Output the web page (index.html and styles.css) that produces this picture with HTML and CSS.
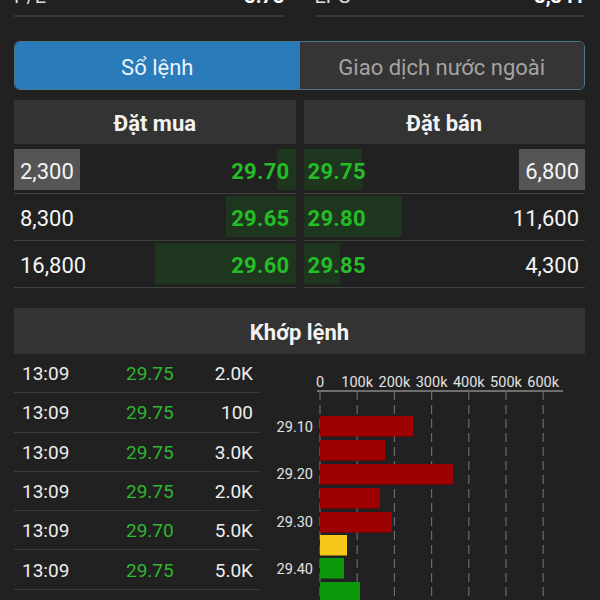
FILE: index.html
```html
<!DOCTYPE html>
<html>
<head>
  <title>Sổ lệnh</title>
  <meta name="viewport" content="width=device-width, initial-scale=1">
  <link rel="stylesheet" href="styles.css">
</head>
<body>
  <div class="page">

    <div class="stats">
      <div class="stat"><span class="stat-label">P/E</span><span class="stat-value">3.73</span></div>
      <div class="stat"><span class="stat-label">EPS</span><span class="stat-value">3,341</span></div>
    </div>

    <div class="tabs">
      <div class="tab active">Sổ lệnh</div>
      <div class="tab">Giao dịch nước ngoài</div>
    </div>

    <div class="book">
      <div class="side buy">
        <div class="panel-head">Đặt mua</div>
        <div class="level">
          <span class="depth" style="width:19px"></span>
          <span class="qty hl">2,300</span><span class="price">29.70</span>
        </div>
        <div class="level">
          <span class="depth" style="width:70px"></span>
          <span class="qty">8,300</span><span class="price">29.65</span>
        </div>
        <div class="level">
          <span class="depth" style="width:141px"></span>
          <span class="qty">16,800</span><span class="price">29.60</span>
        </div>
      </div>
      <div class="side sell">
        <div class="panel-head">Đặt bán</div>
        <div class="level">
          <span class="depth" style="width:58px"></span>
          <span class="price">29.75</span><span class="qty hl">6,800</span>
        </div>
        <div class="level">
          <span class="depth" style="width:98px"></span>
          <span class="price">29.80</span><span class="qty">11,600</span>
        </div>
        <div class="level">
          <span class="depth" style="width:36px"></span>
          <span class="price">29.85</span><span class="qty">4,300</span>
        </div>
      </div>
    </div>

    <div class="panel-head match-head">Khớp lệnh</div>

    <div class="match">
      <div class="trades">
        <div class="trade"><span>13:09</span><span class="t-price">29.75</span><span class="t-vol">2.0K</span></div>
        <div class="trade"><span>13:09</span><span class="t-price">29.75</span><span class="t-vol">100</span></div>
        <div class="trade"><span>13:09</span><span class="t-price">29.75</span><span class="t-vol">3.0K</span></div>
        <div class="trade"><span>13:09</span><span class="t-price">29.75</span><span class="t-vol">2.0K</span></div>
        <div class="trade"><span>13:09</span><span class="t-price">29.70</span><span class="t-vol">5.0K</span></div>
        <div class="trade"><span>13:09</span><span class="t-price">29.75</span><span class="t-vol">5.0K</span></div>
      </div>

      <svg class="chart" width="325" height="260" viewBox="0 0 325 260">
        <g class="axis-text">
          <text x="60" y="33">0</text>
          <text x="97.2" y="33">100k</text>
          <text x="134.4" y="33">200k</text>
          <text x="171.6" y="33">300k</text>
          <text x="208.8" y="33">400k</text>
          <text x="246" y="33">500k</text>
          <text x="283.2" y="33">600k</text>
        </g>
        <line class="axis" x1="57" y1="37" x2="303" y2="37"/>
        <g class="grid">
          <line x1="60" y1="37" x2="60" y2="260"/>
          <line x1="97.2" y1="37" x2="97.2" y2="260"/>
          <line x1="134.4" y1="37" x2="134.4" y2="260"/>
          <line x1="171.6" y1="37" x2="171.6" y2="260"/>
          <line x1="208.8" y1="37" x2="208.8" y2="260"/>
          <line x1="246" y1="37" x2="246" y2="260"/>
          <line x1="283.2" y1="37" x2="283.2" y2="260"/>
        </g>
        <g class="bars">
          <rect class="down" x="60" y="62" width="93" height="20.5"/>
          <rect class="down" x="60" y="86" width="65" height="20.5"/>
          <rect class="down" x="60" y="110" width="133" height="20.5"/>
          <rect class="down" x="60" y="134" width="60" height="20.5"/>
          <rect class="down" x="60" y="158" width="72" height="20.5"/>
          <rect class="ref" x="60" y="181" width="27" height="20.5"/>
          <rect class="up" x="60" y="204" width="24" height="20.5"/>
          <rect class="up" x="60" y="228" width="40" height="20.5"/>
        </g>
        <g class="price-text">
          <text x="53" y="78">29.10</text>
          <text x="53" y="125">29.20</text>
          <text x="53" y="172.5">29.30</text>
          <text x="53" y="220">29.40</text>
        </g>
      </svg>
    </div>

  </div>
</body>
</html>
```

FILE: styles.css
```css
body {
  margin: 0;
  background: #212121;
  color: #eee;
  font-family: Roboto, "Noto Sans", sans-serif;
  overflow: hidden;
}
.page {
  padding: 0 15px 0 14px;
}

/* top stats */
.stats {
  display: grid;
  grid-template-columns: 1fr 1fr;
  gap: 30px;
  margin-top: -23px;
}
.stat {
  display: flex;
  justify-content: space-between;
  align-items: center;
  height: 40px;
  box-sizing: border-box;
  border-bottom: 2px solid #363636;
  font-size: 20px;
}
.stat-label {
  color: #ddd;
}
.stat-value {
  font-weight: bold;
  color: #fff;
}

/* tabs */
.tabs {
  display: flex;
  margin-top: 24px;
  height: 49px;
  border: 1px solid #4b7690;
  border-radius: 6px;
  overflow: hidden;
  box-sizing: border-box;
}
.tab {
  flex: 1;
  display: flex;
  align-items: center;
  justify-content: center;
  padding-top: 3px;
  font-size: 22px;
  color: #a4a4a4;
  background: #363434;
}
.tab.active {
  background: #2a7bba;
  color: #eaf2fa;
}

/* order book */
.book {
  display: grid;
  grid-template-columns: 1fr 1fr;
  gap: 8px;
  margin-top: 10px;
}
.panel-head {
  height: 44px;
  display: flex;
  align-items: center;
  justify-content: center;
  padding-top: 3px;
  box-sizing: border-box;
  background: #333;
  font-size: 22px;
  font-weight: bold;
  color: #f2f2f2;
  margin-bottom: 3px;
}
.level {
  position: relative;
  display: flex;
  justify-content: space-between;
  align-items: stretch;
  height: 47px;
  padding: 2px 0 3px;
  box-sizing: border-box;
  border-bottom: 1px solid #404040;
  font-size: 22px;
}
.depth {
  position: absolute;
  top: 2px;
  bottom: 3px;
  background: #1e361e;
}
.buy .depth {
  right: 0;
}
.sell .depth {
  left: 0;
}
.qty, .price {
  position: relative;
  display: flex;
  align-items: center;
  padding-top: 3px;
}
.qty {
  padding-left: 6px;
  padding-right: 6px;
  color: #f4f4f4;
}
.qty.hl {
  background: #555;
}
.price {
  color: #25bd25;
  font-weight: bold;
  letter-spacing: 0.3px;
}
.buy .price {
  padding-right: 6px;
}
.sell .price {
  padding-left: 4px;
}

/* matched orders */
.match-head {
  margin-top: 20px;
  height: 46px;
  margin-bottom: 0;
}
.match {
  display: grid;
  grid-template-columns: 246px 1fr;
}
.trade {
  display: grid;
  grid-template-columns: 104px auto 1fr;
  align-items: center;
  height: 39.3px;
  padding: 1px 7px 0 8px;
  box-sizing: border-box;
  border-bottom: 1px solid #3c3c3c;
  font-size: 19px;
  color: #eee;
}
.t-price {
  color: #2fb52f;
}
.t-vol {
  text-align: right;
}
.chart {
  display: block;
}
.axis-text text {
  font-size: 14.5px;
  fill: #e2e2e2;
  text-anchor: middle;
}
.price-text text {
  font-size: 14.5px;
  fill: #e2e2e2;
  text-anchor: end;
}
.axis {
  stroke: #8a8a8a;
  stroke-width: 1.5;
}
.grid line {
  stroke: #6a6a6a;
  stroke-width: 1.2;
  stroke-dasharray: 9 5;
}
.bars .down {
  fill: #9c0000;
}
.bars .ref {
  fill: #f7c81a;
}
.bars .up {
  fill: #0c9a0c;
}
```
